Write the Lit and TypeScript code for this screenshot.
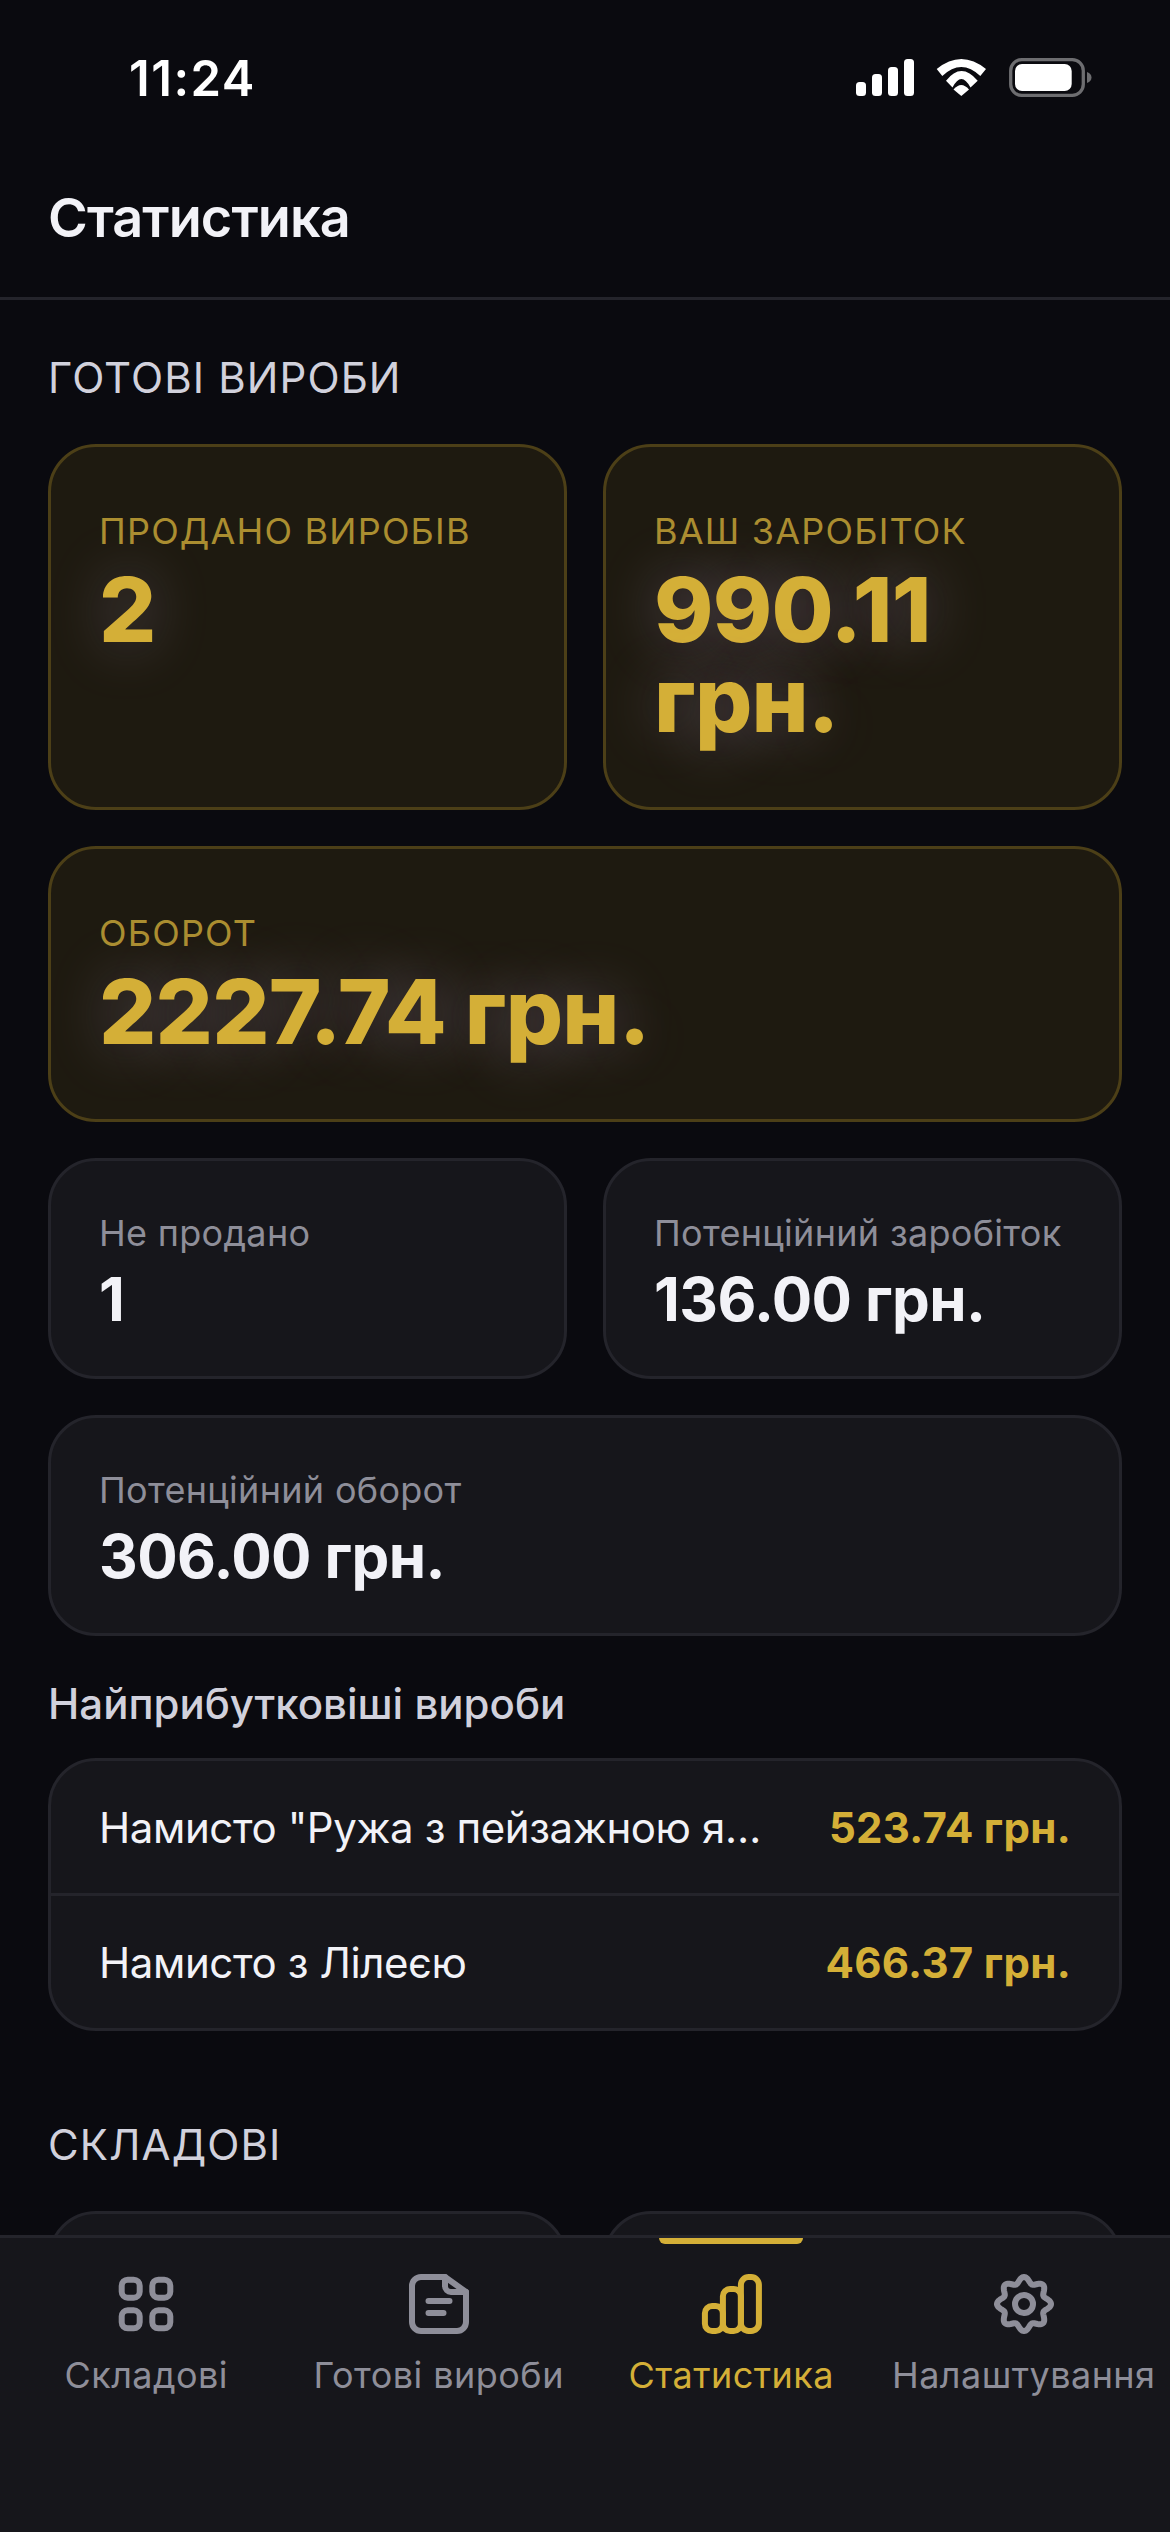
import { LitElement, html, css, svg } from "lit";
import { customElement } from "lit/decorators.js";

function gearPath(): string {
  const pts: string[] = [];
  const n = 180;
  for (let i = 0; i <= n; i++) {
    const t = (i / n) * Math.PI * 2;
    const r = 8 + 1 * Math.cos(8 * t);
    const x = 12 + r * Math.sin(t);
    const y = 12 - r * Math.cos(t);
    pts.push(`${i ? "L" : "M"}${x.toFixed(2)} ${y.toFixed(2)}`);
  }
  return pts.join("") + "Z";
}

const icons: Record<string, unknown> = {
  grid: svg`<rect x="3.9" y="3.9" width="6" height="6" rx="2"/><rect x="14.1" y="3.9" width="6" height="6" rx="2"/><rect x="3.9" y="14.1" width="6" height="6" rx="2"/><rect x="14.1" y="14.1" width="6" height="6" rx="2"/>`,
  doc: svg`<path d="M14 3H6a3 3 0 0 0-3 3v12a3 3 0 0 0 3 3h12a3 3 0 0 0 3-3V8z"/><path d="M14 3v3a2 2 0 0 0 2 2h5"/><path d="M8.500 11h7M8.500 15h5"/>`,
  stats: svg`<rect x="3.300" y="12.700" width="6" height="8.300" rx="2.400"/><rect x="9.300" y="7" width="6" height="14" rx="2.400"/><rect x="15.300" y="3" width="6" height="18" rx="2.600"/>`,
  gear: svg`<path d=${gearPath()}/><circle cx="12" cy="12" r="3"/>`,
};

@customElement("stat-card")
class StatCard extends LitElement {
  static properties = {
    label: { type: String },
    value: { type: String },
    accent: { type: Boolean },
    wide: { type: Boolean, reflect: true },
  };
  declare label: string;
  declare value: string;
  declare accent: boolean;
  declare wide: boolean;

  static styles = css`
    :host { display: block; min-width: 0; font-optical-sizing: none; }
    :host([wide]) { grid-column: 1 / -1; }
    .card {
      box-sizing: border-box;
      height: 100%;
      padding: 50px 48px 44px;
      border: 3px solid #24242b;
      border-radius: 48px;
      background: #16161b;
    }
    .card.accent {
      padding: 60px 48px 62px;
      border-color: #4c3f17;
      background: #1e1a10;
    }
    .label {
      min-height: 45px;
      font-size: 36px;
      line-height: 45px;
      letter-spacing: 0.3px;
      color: #8e8e99;
    }
    .accent .label {
      min-height: 48px;
      line-height: 48px;
      letter-spacing: 1.2px;
      color: #ab8e30;
    }
    .value {
      margin-top: 10px;
      min-height: 66px;
      font-size: 60px;
      line-height: 66px;
      font-weight: 700;
      letter-spacing: -0.6px;
      color: #f2f2f7;
    }
    .accent .value {
      margin-top: 10px;
      font-size: 90px;
      line-height: 90px;
      font-weight: 800;
      letter-spacing: -0.8px;
      color: #d4af37;
      text-shadow: 0 0 60px rgba(215, 185, 250, 0.3);
    }
  `;

  render() {
    return html`<div class="card ${this.accent ? "accent" : ""}">
      <div class="label">${this.label}</div>
      <div class="value">${this.value}</div>
    </div>`;
  }
}

@customElement("app-root")
class AppRoot extends LitElement {
  static styles = css`
    :host {
      display: flex;
      flex-direction: column;
      width: 1170px;
      height: 2532px;
      overflow: hidden;
      background: #0a0a0f;
      font-family: Inter, "Liberation Sans", sans-serif;
      font-optical-sizing: none;
    }
    .status {
      flex: none;
      height: 156px;
      box-sizing: border-box;
      padding: 0 78px 0 129px;
      display: flex;
      justify-content: space-between;
      align-items: center;
      color: #fff;
      font-size: 49px;
      font-weight: 600;
      letter-spacing: 1.5px;
    }
    .status svg { display: block; }
    .header {
      flex: none;
      height: 144px;
      box-sizing: border-box;
      padding: 0 48px 18px;
      display: flex;
      align-items: center;
      border-bottom: 3px solid #24242b;
      font-size: 54px;
      font-weight: 600;
      letter-spacing: -0.9px;
      color: #f2f2f7;
    }
    .main {
      flex: 1;
      min-height: 0;
      overflow: hidden;
      padding: 48px 48px 0;
    }
    .section {
      margin: 0;
      line-height: 60px;
      font-size: 42px;
      font-weight: 400;
      letter-spacing: 1.1px;
      color: #d1d1dc;
    }
    .grid {
      display: grid;
      grid-template-columns: 1fr 1fr;
      gap: 36px;
      margin-top: 36px;
    }
    .h3 {
      margin: 38px 0 0;
      line-height: 60px;
      font-size: 42px;
      font-weight: 500;
      color: #d1d1dc;
    }
    .list {
      margin-top: 24px;
      border: 3px solid #24242b;
      border-radius: 48px;
      background: #16161b;
    }
    .row {
      height: 132px;
      padding: 0 48px;
      display: flex;
      align-items: center;
      justify-content: space-between;
      gap: 48px;
      font-size: 42px;
      color: #f2f2f7;
    }
    .row + .row { border-top: 3px solid #24242b; }
    .name {
      flex: 1;
      min-width: 0;
      overflow: hidden;
      white-space: nowrap;
      text-overflow: ellipsis;
      letter-spacing: -0.4px;
    }
    .price {
      flex: none;
      font-weight: 700;
      letter-spacing: 0.3px;
      color: #d4af37;
    }
    .section.second { margin-top: 84px; }
    .nav {
      flex: none;
      height: 297px;
      box-sizing: border-box;
      border-top: 3px solid #24242b;
      background: #16161b;
      display: flex;
    }
    .tab {
      position: relative;
      flex: 1;
      min-width: 0;
      display: flex;
      flex-direction: column;
      align-items: center;
      padding-top: 30px;
      color: #8e8e99;
      font-size: 36px;
      letter-spacing: 0.45px;
      white-space: nowrap;
    }
    .tab.active { color: #d4af37; }
    .tab.active::before {
      content: "";
      position: absolute;
      top: 0;
      left: 50%;
      width: 144px;
      height: 6px;
      margin-left: -72px;
      border-radius: 0 0 6px 6px;
      background: #d4af37;
    }
    .tab svg {
      display: block;
      width: 72px;
      height: 72px;
      fill: none;
      stroke: currentColor;
      stroke-width: 2;
      stroke-linecap: round;
      stroke-linejoin: round;
    }
    .tab span { margin-top: 14px; line-height: 42px; }
  `;

  render() {
    const tabs = [
      ["grid", "Складові", false],
      ["doc", "Готові вироби", false],
      ["stats", "Статистика", true],
      ["gear", "Налаштування", false],
    ] as const;
    return html`
      <div class="status">
        <span>11:24</span>
        <svg width="236" height="40" viewBox="0 0 236 40">
          <g fill="#fff">
            <rect x="0" y="24" width="10" height="14" rx="3.500"/>
            <rect x="16" y="16" width="10" height="22" rx="3.500"/>
            <rect x="32" y="9" width="10" height="29" rx="3.500"/>
            <rect x="48" y="1" width="10" height="37" rx="3.500"/>
            <path d="M80.700 11Q105.300 -9 130 11L124.300 18Q105.300 0 86.300 18z"/>
            <path d="M90 22.700Q105.300 3.300 121.700 22.700L114.500 29.500Q105.300 12.500 96.500 29.500z"/>
            <path d="M97.500 31.500Q105.300 22.500 113 31.500L105.300 38z"/>
          </g>
          <rect x="154.700" y="1.700" width="72.600" height="35.600" rx="11" fill="none" stroke="#6d6d70" stroke-width="3.300"/>
          <rect x="159" y="6" width="56.700" height="27" rx="7" fill="#fff"/>
          <path d="M231 14c3 1 4.500 3 4.500 5.500s-1.500 4.500-4.500 5.500z" fill="#6d6d70"/>
        </svg>
      </div>
      <div class="header">Статистика</div>
      <div class="main">
        <h2 class="section">ГОТОВІ ВИРОБИ</h2>
        <div class="grid">
          <stat-card accent label="ПРОДАНО ВИРОБІВ" value="2"></stat-card>
          <stat-card accent label="ВАШ ЗАРОБІТОК" value="990.11 грн."></stat-card>
          <stat-card accent wide label="ОБОРОТ" value="2227.74 грн."></stat-card>
          <stat-card label="Не продано" value="1"></stat-card>
          <stat-card label="Потенційний заробіток" value="136.00 грн."></stat-card>
          <stat-card wide label="Потенційний оборот" value="306.00 грн."></stat-card>
        </div>
        <div class="h3">Найприбутковіші вироби</div>
        <div class="list">
          <div class="row"><span class="name">Намисто "Ружа з пейзажною яшмою"</span><span class="price">523.74 грн.</span></div>
          <div class="row"><span class="name">Намисто з Лілеєю</span><span class="price">466.37 грн.</span></div>
        </div>
        <h2 class="section second">СКЛАДОВІ</h2>
        <div class="grid">
          <stat-card label="" value=""></stat-card>
          <stat-card label="" value=""></stat-card>
        </div>
      </div>
      <nav class="nav">
        ${tabs.map(
          ([icon, label, active]) => html`<div class="tab ${active ? "active" : ""}">
            <svg viewBox="0 0 24 24">${icons[icon]}</svg>
            <span>${label}</span>
          </div>`
        )}
      </nav>
    `;
  }
}
